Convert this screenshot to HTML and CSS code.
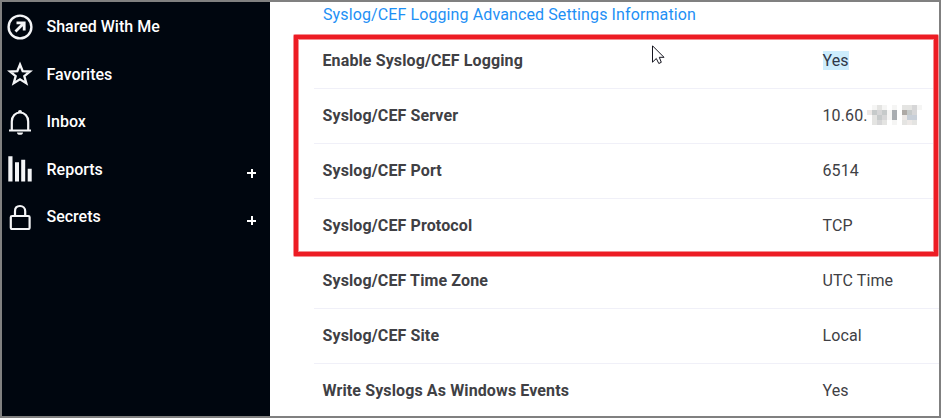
FILE: index.html
```html
<!DOCTYPE html>
<html lang="en">
<head>
<meta charset="utf-8">
<title>Syslog/CEF Settings</title>
<link rel="stylesheet" href="styles.css">
</head>
<body>
<div class="frame">
  <nav class="sidebar">
    <a class="item"><svg class="icon" viewBox="0 0 26 26"><circle cx="13" cy="13" r="11.4" stroke-width="2.4"/><path d="M8.5 17.5 17 9M9.5 8.8H17.2V16.5" stroke-width="2.8"/></svg><span>Shared With Me</span></a>
    <a class="item"><svg class="icon" viewBox="0 0 26 26"><path d="M13 3.500 15.700 10.200 23 10.500 17.300 15.100 19.300 22.300 13 18.300 6.700 22.300 8.700 15.100 3 10.500 10.300 10.200Z" stroke-width="2.3"/></svg><span>Favorites</span></a>
    <a class="item"><svg class="icon" viewBox="0 0 26 26"><path d="M2 21.5H24M4.8 21V12.5C4.8 7 8.5 3.5 13 3.5S21.2 7 21.2 12.5V21" stroke-width="2.2"/><path class="solid" d="M11 3a2 2 0 0 1 4 0ZM10 23.4h6a3 2.4 0 0 1-6 0Z"/></svg><span>Inbox</span></a>
    <a class="item"><svg class="icon" viewBox="0 0 26 26"><path class="solid" d="M1.3.2h4.200v25.300h-4.200ZM8 6.2h4v19.300H8ZM14.200 3.700H18.200v21.800h-4ZM20.700 12.700h4v12.800h-4Z"/></svg><span>Reports</span><b class="plus"></b></a>
    <a class="item"><svg class="icon" viewBox="0 0 26 26"><rect x="3.800" y="12" width="18.800" height="13" rx="1.3" stroke-width="2.2"/><path d="M8 12V7.300C8 4 10 2 13 2S18.200 4 18.200 7.300V12" stroke-width="2.2"/></svg><span>Secrets</span><b class="plus"></b></a>
  </nav>
  <main class="content">
    <h1 class="title">Syslog/CEF Logging Advanced Settings Information</h1>
    <dl class="rows">
      <div class="row"><dt>Enable Syslog/CEF Logging</dt><dd><mark>Yes</mark></dd></div>
      <div class="row"><dt>Syslog/CEF Server</dt><dd>10.60.<svg class="mosaic" viewBox="0 0 11 4" shape-rendering="crispEdges">
        <path fill="#f5f5f4" d="M1 0h1v1H1ZM3 0h1v1H3ZM5 0h1v1H5ZM10 0h1v1h-1ZM4 1h1v2H4ZM5 3h1v1H5Z"/>
        <path fill="#ede9e7" d="M0 1h1v1H0ZM7 2h1v1H7ZM8 3h1v1H8Z"/>
        <path fill="#e4e4e2" d="M2 0h1v1H2ZM7 0h2v1H7ZM1 2h1v2H1ZM3 3h1v1H3ZM7 3h1v1H7ZM9 3h1v1H9Z"/>
        <path fill="#d6d6d7" d="M9 0h1v2H9ZM2 1h1v1H2ZM3 2h1v1H3ZM2 3h1v1H2Z"/>
        <path fill="#c6caca" d="M1 1h1v1H1ZM3 1h1v1H3ZM8 1h1v1H8ZM2 2h1v1H2Z"/>
        <path fill="#c8cfd8" d="M8 2h2v1H8Z"/>
        <path fill="#a9adb1" d="M5 1h1v2H5Z"/>
        <path fill="#aeaaa6" d="M7 1h1v1H7Z"/>
      </svg></dd></div>
      <div class="row"><dt>Syslog/CEF Port</dt><dd>6514</dd></div>
      <div class="row"><dt>Syslog/CEF Protocol</dt><dd>TCP</dd></div>
      <div class="row"><dt>Syslog/CEF Time Zone</dt><dd>UTC Time</dd></div>
      <div class="row"><dt>Syslog/CEF Site</dt><dd>Local</dd></div>
      <div class="row"><dt>Write Syslogs As Windows Events</dt><dd>Yes</dd></div>
    </dl>
  </main>
</div>
<div class="highlight"></div>
<svg class="cursor" viewBox="0 0 13 20"><path d="M.5.8V17.200L4.300 13.500 6.800 18.500 9.300 17.300 7.300 12.300H12Z" fill="#fff" stroke="#15151f" stroke-width="1"/></svg>
</body>
</html>
```
FILE: styles.css
```css
* { box-sizing: border-box; }
body { margin: 0; font-family: Roboto, "Liberation Sans", sans-serif; font-size: 16px; overflow: hidden; }
.frame { display: flex; width: 941px; height: 418px; border: 2px solid #808080; overflow: hidden; background: #fff; }
.sidebar { width: 268px; flex: none; background: #00060f; color: #fff; padding-top: 1px; }
.item { display: flex; align-items: center; height: 47.5px; padding: 0 14px 0 5px; font-weight: 500; }
.icon { width: 26px; height: 26px; margin-right: 13.5px; fill: none; stroke: #f4f5f7; flex: none; }
.solid { fill: #f4f5f7; stroke: none; }
.plus { width: 9px; height: 9px; margin: 8px 0 0 auto; background: linear-gradient(#fff, #fff) center / 9px 2px no-repeat, linear-gradient(#fff, #fff) center / 2px 9px no-repeat; }
.content { flex: 1; min-width: 0; padding-left: 44px; }
.title { margin: 0; height: 32px; padding-left: 9px; font-size: 16px; line-height: 25px; font-weight: 400; letter-spacing: .11px; color: #1e90f5; white-space: nowrap; }
.rows { margin: 0; }
.row { display: flex; align-items: center; height: 55px; padding: 0 0 2px 8.5px; border-bottom: 1px solid #f0f0f8; color: #404044; }
dt { width: 500px; font-weight: 700; letter-spacing: .12px; white-space: nowrap; }
dd { margin: 0; display: flex; align-items: center; letter-spacing: .12px; white-space: nowrap; }
mark { background: #cdedfd; color: #303848; }
.mosaic { width: 55px; height: 20px; margin-left: -1px; }
.highlight { position: absolute; left: 293px; top: 34px; width: 646px; height: 223px; border: 6px solid #f58c90; border-radius: 2px; }
.highlight::after { content: ""; position: absolute; inset: -5px; border: 4px solid #ed1c24; }
.cursor { position: absolute; left: 652px; top: 45px; width: 13px; height: 20px; }
```
